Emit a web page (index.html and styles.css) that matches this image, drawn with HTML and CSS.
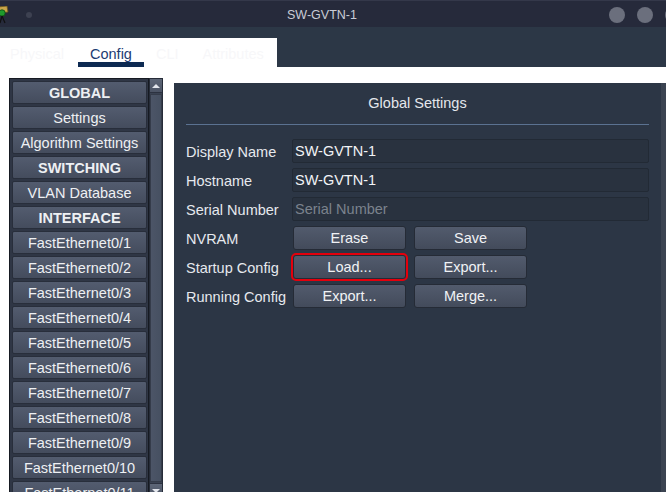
FILE: index.html
```html
<!DOCTYPE html>
<html lang="en">
<head>
<meta charset="utf-8">
<title>SW-GVTN-1</title>
<link rel="stylesheet" href="styles.css">
</head>
<body>
<div class="window">
  <header class="titlebar">
    <div class="tb-left">
      <svg class="app-icon" width="9" height="18" viewBox="0 0 9 18">
        <path d="M-2 1 L7 0 L8 6 L-1 7 Z" fill="#c9a54a" stroke="#6b5520" stroke-width="0.8"/>
        <circle cx="2" cy="7" r="3.2" fill="#1f9a2c" stroke="#0b4a12" stroke-width="0.8"/>
        <path d="M2 10 L5 17 M2 10 L0 17" stroke="#111" stroke-width="1.2"/>
      </svg>
      <span class="tb-dot"></span>
    </div>
    <div class="tb-title">SW-GVTN-1</div>
    <div class="tb-controls">
      <span class="ctl"></span><span class="ctl"></span><span class="ctl"></span>
    </div>
  </header>
  <div class="band"></div>
  <div class="tabrow">
    <nav class="tabs">
      <span class="tab tab-first">Physical</span>
      <span class="tab tab-active">Config</span>
      <span class="tab">CLI</span>
      <span class="tab">Attributes</span>
    </nav>
  </div>
  <main class="main">
    <div class="sidebar">
      <div class="list">
        <div class="item item-head">GLOBAL</div>
        <div class="item">Settings</div>
        <div class="item">Algorithm Settings</div>
        <div class="item item-head">SWITCHING</div>
        <div class="item">VLAN Database</div>
        <div class="item item-head">INTERFACE</div>
        <div class="item">FastEthernet0/1</div>
        <div class="item">FastEthernet0/2</div>
        <div class="item">FastEthernet0/3</div>
        <div class="item">FastEthernet0/4</div>
        <div class="item">FastEthernet0/5</div>
        <div class="item">FastEthernet0/6</div>
        <div class="item">FastEthernet0/7</div>
        <div class="item">FastEthernet0/8</div>
        <div class="item">FastEthernet0/9</div>
        <div class="item">FastEthernet0/10</div>
        <div class="item">FastEthernet0/11</div>
        <div class="item">FastEthernet0/12</div>
      </div>
      <div class="scrollbar">
        <div class="sb-btn"><span class="arrow-up"></span></div>
        <div class="sb-track"></div>
        <div class="sb-btn"><span class="arrow-down"></span></div>
      </div>
    </div>
    <section class="panel">
      <h2 class="panel-title">Global Settings</h2>
      <div class="rule"></div>
      <div class="form">
        <span class="label">Display Name</span>
        <div class="field">SW-GVTN-1</div>
        <span class="label">Hostname</span>
        <div class="field">SW-GVTN-1</div>
        <span class="label">Serial Number</span>
        <div class="field field-placeholder">Serial Number</div>
        <span class="label">NVRAM</span>
        <div class="btns"><button class="btn">Erase</button><button class="btn">Save</button></div>
        <span class="label">Startup Config</span>
        <div class="btns"><button class="btn btn-focus">Load...</button><button class="btn">Export...</button></div>
        <span class="label">Running Config</span>
        <div class="btns"><button class="btn">Export...</button><button class="btn">Merge...</button></div>
      </div>
    </section>
    <div class="panel-edge"></div>
  </main>
</div>
</body>
</html>
```
FILE: styles.css
```css
* { box-sizing: border-box; }
html, body {
  margin: 0;
  padding: 0;
  width: 666px;
  height: 492px;
  overflow: hidden;
  background: #ffffff;
  font-family: "Liberation Sans", Arial, sans-serif;
  font-size: 14.5px;
}
.window {
  width: 666px;
  height: 492px;
  overflow: hidden;
  display: flex;
  flex-direction: column;
}

/* title bar */
.titlebar {
  height: 27px;
  flex: none;
  display: flex;
  align-items: center;
  background: #262a3b;
  border-top: 1px solid #34384a;
  overflow: hidden;
}
.tb-left {
  width: 35px;
  flex: none;
  height: 100%;
  display: flex;
  align-items: center;
}
.app-icon { margin-top: 1px; flex: none; }
.tb-dot {
  width: 6px;
  height: 6px;
  border-radius: 50%;
  background: #3d4151;
  margin-left: 17px;
  margin-top: 2px;
}
.tb-title {
  flex: 1;
  min-width: 0;
  text-align: center;
  color: #c9ccd6;
  font-size: 12.5px;
  margin-top: 1px;
}
.tb-controls {
  flex: none;
  width: 57px;
  display: flex;
  gap: 12px;
  margin-top: 2px;
}
.ctl {
  flex: none;
  width: 16px;
  height: 16px;
  border-radius: 50%;
  background: #6b6f7d;
}

.band {
  height: 11px;
  flex: none;
  background: #2c3746;
}

/* tabs */
.tabrow {
  height: 29px;
  flex: none;
  background: #2c3746;
  display: flex;
}
.tabs {
  width: 277px;
  background: #ffffff;
  display: flex;
}
.tab {
  height: 29px;
  padding: 8px 12px 0;
  line-height: 17px;
  font-size: 14.5px;
  color: #f7f7f9;
  border-bottom: 5px solid transparent;
}
.tab-first { padding-left: 10px; padding-right: 14px; }
.tab-active {
  color: #1c3b72;
  border-bottom-color: #0d2a52;
}

/* main */
.main {
  flex: 1;
  display: flex;
  align-items: flex-start;
  padding: 11px 0 0 9px;
  background: #ffffff;
}

.sidebar {
  flex: none;
  display: flex;
  height: 420px;
}
.list {
  width: 140px;
  height: 100%;
  overflow: hidden;
  border: 1px solid #161a22;
  background: #2f3645;
  padding: 2px 1px 0 2px;
}
.item {
  height: 23px;
  margin-bottom: 2px;
  border: 1px solid #282e3b;
  border-radius: 2px;
  background: linear-gradient(#535c6f, #444c5d);
  color: #eef0f3;
  text-align: center;
  padding-top: 1px;
  line-height: 21px;
  white-space: nowrap;
}
.item-head { font-weight: bold; }

.scrollbar {
  width: 14px;
  height: 100%;
  display: flex;
  flex-direction: column;
  background: #3a4252;
  border: 1px solid #262c38;
}
.sb-btn {
  height: 14px;
  flex: none;
  background: linear-gradient(#5d6677, #4b5364);
  display: flex;
  align-items: center;
  justify-content: center;
  border-bottom: 1px solid #2c3240;
}
.sb-btn:last-child { border-bottom: none; border-top: 1px solid #2c3240; }
.arrow-up {
  width: 0; height: 0;
  border-left: 4px solid transparent;
  border-right: 4px solid transparent;
  border-bottom: 4px solid #e3e6ec;
}
.arrow-down {
  width: 0; height: 0;
  border-left: 4px solid transparent;
  border-right: 4px solid transparent;
  border-top: 4px solid #e3e6ec;
}
.sb-track {
  flex: 1;
  margin: 1px 0;
  background: linear-gradient(90deg, #4c5567, #465061);
  border: 1px solid #353c4a;
}

/* panel */
.panel {
  flex: none;
  width: 487px;
  height: 420px;
  margin: 5px 0 0 11px;
  background: #2c3645;
  padding: 12px 12px 0;
}
.panel-edge {
  flex: none;
  width: 5px;
  height: 420px;
  margin-top: 5px;
  background: #3b4351;
}
.panel-title {
  margin: 0;
  font-size: 14.5px;
  font-weight: normal;
  line-height: 16px;
  text-align: center;
  color: #e4e7ec;
}
.rule {
  height: 1px;
  margin-top: 13px;
  background: #5b7291;
}
.form {
  margin-top: 14px;
  display: grid;
  grid-template-columns: 106px 357px;
  grid-auto-rows: 24px;
  row-gap: 5px;
  align-items: center;
}
.label {
  color: #e6e9ee;
  line-height: 16px;
  padding-top: 2px;
  white-space: nowrap;
}
.field {
  height: 24px;
  border: 1px solid #222a35;
  border-radius: 2px;
  background: #29323f;
  color: #f2f4f7;
  padding-left: 2px;
  padding-top: 1px;
  line-height: 21px;
}
.field-placeholder { color: #7b828d; }
.btns {
  display: flex;
  gap: 8px;
  margin-left: 1px;
  height: 24px;
}
.btn {
  width: 113px;
  height: 24px;
  padding: 1px 0 0;
  margin: 0;
  border: 1px solid #252b36;
  border-radius: 3px;
  background: linear-gradient(#525b6d, #434b5b);
  color: #f0f2f5;
  font-family: "Liberation Sans", Arial, sans-serif;
  font-size: 14.5px;
  line-height: 21px;
  text-align: center;
}
.btn-focus {
  outline: 2px solid #e4000c;
}
```
